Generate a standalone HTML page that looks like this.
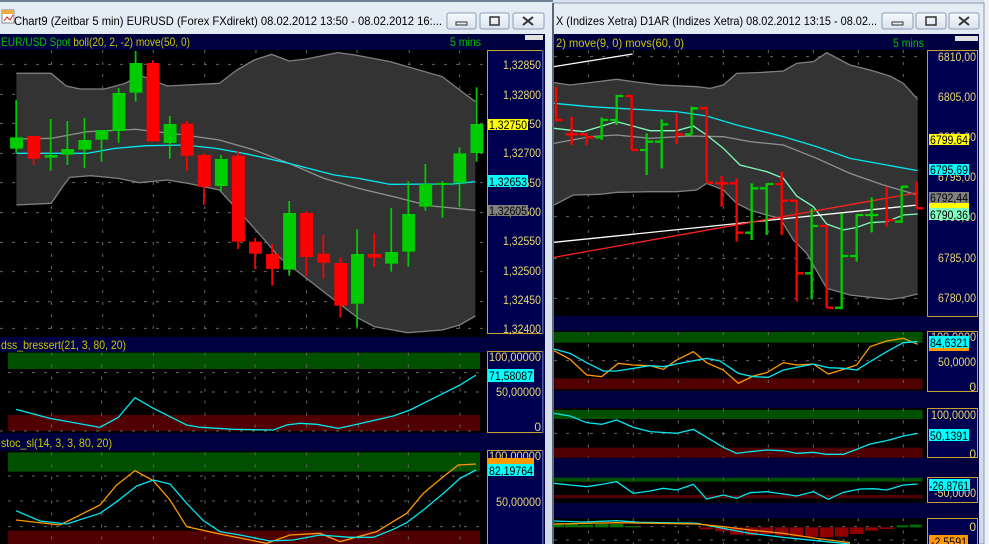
<!DOCTYPE html>
<html><head><meta charset="utf-8"><style>
html,body{margin:0;padding:0;background:#d6e0ec;width:989px;height:544px;overflow:hidden}
svg{display:block}
text{font-family:"Liberation Sans",sans-serif}
</style></head><body>
<svg width="989" height="544" viewBox="0 0 989 544" xmlns="http://www.w3.org/2000/svg">
<defs>
<linearGradient id="tb" x1="0" y1="0" x2="0" y2="1"><stop offset="0" stop-color="#e4ecf5"/><stop offset="1" stop-color="#cfdbe8"/></linearGradient>
<linearGradient id="bt" x1="0" y1="0" x2="0" y2="1"><stop offset="0" stop-color="#f6f9fc"/><stop offset="1" stop-color="#d9e3ee"/></linearGradient>
</defs>
<rect width="989" height="544" fill="#d6e0ec"/>
<rect x="984" y="0" width="5" height="544" fill="#eef1f5"/>
<!-- RIGHT WINDOW -->
<rect x="551" y="3" width="433" height="541" fill="url(#tb)" stroke="#8a9bb0"/>
<text x="556" y="25" font-size="12" fill="#000" textLength="321" lengthAdjust="spacingAndGlyphs">X (Indizes Xetra) D1AR (Indizes Xetra) 08.02.2012 13:15 - 08.02...</text>
<rect x="882" y="13" width="31" height="16" rx="2" fill="url(#bt)" stroke="#8d9db2"/><rect x="892" y="22" width="11" height="3" fill="none" stroke="#333"/>
<rect x="916" y="13" width="30" height="16" rx="2" fill="url(#bt)" stroke="#8d9db2"/><rect x="926" y="17" width="10" height="8" fill="none" stroke="#333" stroke-width="1.5"/>
<rect x="949" y="13" width="30" height="16" rx="2" fill="url(#bt)" stroke="#8d9db2"/><path d="M959 17l10 8M969 17l-10 8" stroke="#333" stroke-width="2"/>
<rect x="554" y="34" width="425" height="510" fill="#000040"/>
<text x="556" y="47" font-size="12" fill="#c8c800" textLength="128" lengthAdjust="spacingAndGlyphs">2) move(9, 0) movs(60, 0)</text>
<text x="893" y="47" font-size="12" fill="#00c000" textLength="31" lengthAdjust="spacingAndGlyphs">5 mins</text>
<rect x="955" y="36" width="23" height="5" fill="#e0e0e0"/>
<rect x="554" y="50" width="373" height="266" fill="#000"/>
<rect x="554" y="331" width="373" height="60" fill="#000"/>
<rect x="554" y="408" width="373" height="50" fill="#000"/>
<rect x="554" y="478" width="373" height="25" fill="#000"/>
<rect x="554" y="518" width="373" height="26" fill="#000"/>
<!-- right main -->
<svg x="550" y="40" width="439" height="290" viewBox="0 0 1317 870" preserveAspectRatio="none">
<g stroke="#666" stroke-dasharray="3 9" stroke-width="1" fill="none">
<path vector-effect="non-scaling-stroke" d="M115 30V820M250 30V820M385 30V820M520 30V820M655 30V820M790 30V820M925 30V820M1060 30V820"/>
<path vector-effect="non-scaling-stroke" d="M12 50H1120M12 170H1120M12 290H1120M12 410H1120M12 530H1120M12 655H1120M12 775H1120"/>
</g>
<polygon fill="#333" points="12,128 60,135 120,128 200,118 250,125 330,135 440,140 480,145 520,135 560,100 640,97 700,93 740,70 790,65 830,38 900,75 960,90 1020,108 1060,130 1103,178 1103,762 1060,772 1020,778 960,772 900,765 830,745 770,640 730,600 690,535 650,525 600,510 560,490 520,450 470,430 440,450 380,455 300,455 200,457 150,463 70,465 12,495"/>
<g fill="none" stroke-width="1.3">
<polyline stroke="#808080" vector-effect="non-scaling-stroke" points="12,128 60,135 120,128 200,118 250,125 330,135 440,140 480,145 520,135 560,100 640,97 700,93 740,70 790,65 830,38 900,75 960,90 1020,108 1060,130 1103,178"/>
<polyline stroke="#808080" vector-effect="non-scaling-stroke" points="1103,762 1060,772 1020,778 960,772 900,765 830,745 770,640 730,600 690,535 650,525 600,510 560,490 520,450 470,430 440,450 380,455 300,455 200,457 150,463 70,465 12,495"/>
<polyline stroke="#fff" vector-effect="non-scaling-stroke" points="12,80 248,42"/>
<polyline stroke="#00e8f0" vector-effect="non-scaling-stroke" points="12,190 120,200 380,215 470,228 560,255 700,290 800,320 900,355 1103,392"/>
<polyline stroke="#909090" vector-effect="non-scaling-stroke" points="12,310 120,290 200,285 300,295 420,288 520,290 600,305 700,315 800,355 900,400 1000,435 1103,465"/>
<polyline stroke="#80ffc0" vector-effect="non-scaling-stroke" points="12,265 100,275 200,245 300,272 380,272 430,258 470,285 520,325 570,375 650,395 700,415 740,468 790,500 830,552 880,570 920,562 960,548 1010,545 1060,525 1103,522"/>
<polyline stroke="#fff" vector-effect="non-scaling-stroke" points="12,607 1103,495"/>
<polyline stroke="#ff2020" vector-effect="non-scaling-stroke" points="12,652 1103,458"/>
</g>
<g stroke-width="7" fill="none">
<path stroke="#ff0000" d="M18 140V245M18 240H38M65 230V315M65 283H85M45 283H65M110 280V315M110 292H130M90 283H110M245 165V330M225 168H245M245 330H265M380 220V312M380 283H400M470 200V425M450 205H470M470 428H490M515 408V500M495 430H515M515 430H535M560 415V605M540 430H560M560 578H580M695 395V585M675 432H695M695 482H715M740 480V785M720 482H740M740 700H760M830 555V803M810 558H830M830 803H850M1010 440V560M1010 540H1030M1100 425V505M1100 505H1120"/>
<path stroke="#00cc00" d="M155 232V300M135 292H155M155 240H175M200 165V255M180 240H200M200 168H220M290 280V405M270 330H290M290 305H310M335 238V385M315 305H335M335 253H355M425 200V283M405 283H425M425 205H445M605 430V600M585 578H605M605 445H625M650 430V585M630 445H650M650 432H670M785 505V778M765 700H785M785 558H805M875 520V808M855 803H875M875 648H895M920 522V665M900 648H920M920 525H940M965 472V577M945 525H965M965 525H985M1055 438V548M1035 545H1055M1055 440H1075"/>
</g>
</svg>
<!-- right sub -->
<svg x="550" y="320" width="439" height="224" viewBox="0 0 1317 672" preserveAspectRatio="none">
<rect x="12" y="36" width="1106" height="32" fill="#005000"/><rect x="12" y="175" width="1106" height="33" fill="#500000"/>
<rect x="12" y="270" width="1106" height="27" fill="#005000"/><rect x="12" y="383" width="1106" height="30" fill="#500000"/>
<rect x="12" y="473" width="1106" height="12" fill="#005000"/><rect x="12" y="525" width="1106" height="10" fill="#500000"/>
<g stroke="#666" stroke-dasharray="3 9" fill="none">
<path vector-effect="non-scaling-stroke" d="M115 36V208M250 36V208M385 36V208M520 36V208M655 36V208M790 36V208M925 36V208M1060 36V208M115 265V413M250 265V413M385 265V413M520 265V413M655 265V413M790 265V413M925 265V413M1060 265V413M115 473V535M250 473V535M385 473V535M520 473V535M655 473V535M790 473V535M925 473V535M1060 473V535M115 595V672M250 595V672M385 595V672M520 595V672M655 595V672M790 595V672M925 595V672M1060 595V672"/>
<path vector-effect="non-scaling-stroke" d="M12 122H1120M12 340H1120M12 620H1120M12 660H1120"/>
</g>
<g fill="#007000"><rect x="12" y="610" width="30" height="12"/><rect x="45" y="612" width="40" height="10"/><rect x="90" y="614" width="40" height="8"/><rect x="135" y="612" width="40" height="10"/><rect x="180" y="612" width="40" height="10"/><rect x="225" y="618" width="40" height="4"/><rect x="1040" y="616" width="35" height="6"/><rect x="1080" y="614" width="35" height="8"/></g>
<g fill="#900000"><rect x="450" y="622" width="40" height="6"/><rect x="495" y="622" width="40" height="12"/><rect x="540" y="622" width="40" height="22"/><rect x="585" y="622" width="40" height="24"/><rect x="630" y="622" width="40" height="20"/><rect x="675" y="622" width="40" height="25"/><rect x="720" y="622" width="40" height="28"/><rect x="765" y="622" width="40" height="28"/><rect x="810" y="622" width="40" height="30"/><rect x="855" y="622" width="40" height="28"/><rect x="900" y="622" width="40" height="20"/><rect x="945" y="622" width="40" height="10"/><rect x="990" y="622" width="40" height="5"/></g>
<g fill="none" stroke-width="1.3">
<polyline stroke="#ff9900" vector-effect="non-scaling-stroke" points="12,92 60,118 110,165 155,170 205,130 250,135 300,137 340,148 380,120 430,95 470,128 520,150 565,190 610,168 650,158 700,128 740,135 790,132 835,162 880,148 920,135 960,80 1010,63 1060,55 1103,73"/>
<polyline stroke="#00e8f0" vector-effect="non-scaling-stroke" points="12,87 60,100 110,128 160,153 200,153 250,145 300,137 340,140 400,128 470,115 510,123 565,160 610,170 655,172 700,150 790,132 835,143 880,145 920,150 960,125 1010,95 1060,68 1103,65"/>
<polyline stroke="#00e8f0" vector-effect="non-scaling-stroke" points="12,280 60,288 110,308 155,313 200,300 250,322 300,335 380,340 430,328 480,358 520,382 560,400 600,395 650,390 700,392 740,400 790,397 830,403 880,403 920,388 960,372 1010,362 1060,348 1103,340"/>
<polyline stroke="#00e8f0" vector-effect="non-scaling-stroke" points="12,490 60,495 110,500 155,493 200,485 250,520 300,513 340,505 380,510 430,493 470,537 520,525 560,535 600,518 650,515 700,522 740,528 790,515 835,538 880,517 930,507 970,506 1010,510 1060,495 1103,492"/>
<polyline stroke="#00e8f0" vector-effect="non-scaling-stroke" points="12,603 100,606 200,602 270,607 440,610 520,625 600,640 700,652 800,662 900,672"/>
<polyline stroke="#ff9900" vector-effect="non-scaling-stroke" points="12,612 200,608 440,612 520,620 600,630 700,640 800,655 900,668"/>
</g>
</svg>
<!-- right axes -->
<g fill="#000050" stroke="#c8a030">
<rect x="927.5" y="50.5" width="50" height="266"/><rect x="927.5" y="331.5" width="50" height="60"/><rect x="927.5" y="408.5" width="50" height="49"/><rect x="927.5" y="477.5" width="50" height="25"/><rect x="927.5" y="518.5" width="50" height="26"/>
</g>
<g font-size="12" fill="#e8d870" text-anchor="end" lengthAdjust="spacingAndGlyphs">
<text x="976" y="61" textLength="38" lengthAdjust="spacingAndGlyphs">6810,00</text><text x="976" y="101" textLength="38" lengthAdjust="spacingAndGlyphs">6805,00</text><text x="976" y="141" textLength="38" lengthAdjust="spacingAndGlyphs">6800,00</text><text x="976" y="181" textLength="38" lengthAdjust="spacingAndGlyphs">6795,00</text><text x="976" y="221" textLength="38" lengthAdjust="spacingAndGlyphs">6790,00</text><text x="976" y="262" textLength="38" lengthAdjust="spacingAndGlyphs">6785,00</text><text x="976" y="302" textLength="38" lengthAdjust="spacingAndGlyphs">6780,00</text>
<text x="976" y="341" textLength="45" lengthAdjust="spacingAndGlyphs">100,0000</text><text x="976" y="366" textLength="38" lengthAdjust="spacingAndGlyphs">50,0000</text><text x="976" y="391">0</text>
<text x="976" y="419" textLength="45" lengthAdjust="spacingAndGlyphs">100,0000</text><text x="976" y="458">0</text><text x="976" y="497" textLength="42" lengthAdjust="spacingAndGlyphs">-50,0000</text><text x="976" y="531">0</text>
</g>
<rect x="929" y="134" width="40" height="11" fill="#ffff00"/><rect x="929" y="164" width="40" height="11" fill="#00ffff"/><rect x="929" y="192" width="40" height="11" fill="#808080"/><rect x="929" y="203" width="40" height="5" fill="#ffff00"/><rect x="929" y="208" width="40" height="12" fill="#80ffc0"/>
<rect x="929" y="336" width="40" height="12" fill="#00ffff"/><rect x="929" y="348" width="40" height="3" fill="#ff9900"/><rect x="929" y="429" width="40" height="12" fill="#00ffff"/><rect x="929" y="479" width="41" height="12" fill="#00ffff"/><rect x="929" y="535" width="39" height="9" fill="#ff9900"/>
<g font-size="12" fill="#000">
<text x="930" y="144" textLength="38" lengthAdjust="spacingAndGlyphs">6799,64</text><text x="930" y="174" textLength="38" lengthAdjust="spacingAndGlyphs">6795,69</text><text x="930" y="202" textLength="38" lengthAdjust="spacingAndGlyphs">6792,44</text><text x="930" y="219" textLength="38" lengthAdjust="spacingAndGlyphs">6790,36</text><text x="930" y="347" textLength="38" lengthAdjust="spacingAndGlyphs">84,6321</text><text x="930" y="440" textLength="38" lengthAdjust="spacingAndGlyphs">50,1391</text><text x="929" y="490" textLength="40" lengthAdjust="spacingAndGlyphs">-26,8761</text><text x="931" y="546" textLength="36" lengthAdjust="spacingAndGlyphs">-2,5591</text>
</g>
<!-- LEFT WINDOW -->
<rect x="0" y="0" width="553" height="544" fill="url(#tb)"/>
<rect x="0" y="0" width="553" height="2" fill="#6f8095"/>
<rect x="552" y="3" width="2" height="541" fill="#59687a"/>
<rect x="2" y="10" width="12" height="13" fill="#fff" stroke="#888"/><rect x="2" y="10" width="12" height="4" fill="#e8b040"/><path d="M4 21l3-4 3 3 3-5" stroke="#d02020" fill="none"/>
<text x="14" y="25" font-size="12" fill="#000" textLength="428" lengthAdjust="spacingAndGlyphs">Chart9 (Zeitbar 5 min)  EURUSD (Forex FXdirekt) 08.02.2012 13:50 - 08.02.2012 16:...</text>
<rect x="447" y="13" width="29" height="16" rx="2" fill="url(#bt)" stroke="#8d9db2"/><rect x="456" y="22" width="11" height="3" fill="none" stroke="#333"/>
<rect x="480" y="13" width="29" height="16" rx="2" fill="url(#bt)" stroke="#8d9db2"/><rect x="490" y="17" width="9" height="8" fill="none" stroke="#333" stroke-width="1.5"/>
<rect x="513" y="13" width="31" height="16" rx="2" fill="url(#bt)" stroke="#8d9db2"/><path d="M523 17l10 8M533 17l-10 8" stroke="#333" stroke-width="2"/>
<rect x="0" y="34" width="545" height="510" fill="#000040"/>
<text x="1" y="46" font-size="12" fill="#00c000" textLength="189" lengthAdjust="spacingAndGlyphs">EUR/USD Spot <tspan fill="#c8c800">boll(20, 2, -2) move(50, 0)</tspan></text>
<text x="450" y="46" font-size="12" fill="#00c000" textLength="31" lengthAdjust="spacingAndGlyphs">5 mins</text>
<rect x="525" y="35" width="18" height="5" fill="#e0e0e0"/>
<rect x="0" y="50" width="487" height="287" fill="#000"/>
<rect x="0" y="352" width="487" height="81" fill="#000"/>
<rect x="0" y="451" width="487" height="93" fill="#000"/>
<svg x="0" y="40" width="545" height="300" viewBox="0 0 1565 900" preserveAspectRatio="none">
<g stroke="#666" stroke-dasharray="3 9" fill="none">
<path vector-effect="non-scaling-stroke" d="M148 30V880M295 30V880M440 30V880M588 30V880M735 30V880M880 30V880M1025 30V880M1175 30V880M1320 30V880"/>
<path vector-effect="non-scaling-stroke" d="M0 73H1395M0 163H1395M0 250H1395M0 340H1395M0 428H1395M0 518H1395M0 607H1395M0 695H1395M0 785H1395M0 865H1395"/>
</g>
<polygon fill="#333" points="47,100 147,100 190,138 230,147 300,147 360,130 400,105 480,138 630,130 680,90 730,60 780,43 830,63 880,57 970,38 1020,45 1120,65 1270,110 1320,150 1365,185 1365,828 1320,855 1270,870 1170,878 1075,860 1030,835 960,780 880,715 800,650 760,600 700,530 630,450 540,430 480,420 400,428 340,415 260,407 200,412 180,440 147,490 47,495"/>
<g fill="none" stroke-width="1.3">
<polyline stroke="#808080" vector-effect="non-scaling-stroke" points="47,100 147,100 190,138 230,147 300,147 360,130 400,105 480,138 630,130 680,90 730,60 780,43 830,63 880,57 970,38 1020,45 1120,65 1270,110 1320,150 1365,185"/>
<polyline stroke="#808080" vector-effect="non-scaling-stroke" points="1365,828 1320,855 1270,870 1170,878 1075,860 1030,835 960,780 880,715 800,650 760,600 700,530 630,450 540,430 480,420 400,428 340,415 260,407 200,412 180,440 147,490 47,495"/>
<polyline stroke="#909090" vector-effect="non-scaling-stroke" points="47,297 147,295 250,275 390,268 530,285 630,300 730,330 830,370 930,415 1030,445 1130,470 1230,497 1365,511"/>
<polyline stroke="#00e8f0" vector-effect="non-scaling-stroke" points="47,340 250,340 330,325 420,317 530,315 620,325 700,340 830,370 960,405 1030,415 1120,433 1300,432 1365,425"/>
</g>
<g fill="#00cc00">
<rect x="44" y="180" width="5" height="160"/><rect x="29" y="292" width="37" height="34"/>
<rect x="143" y="237" width="5" height="155"/><rect x="128" y="345" width="37" height="8"/>
<rect x="191" y="243" width="5" height="132"/><rect x="176" y="327" width="37" height="17"/>
<rect x="240" y="234" width="5" height="150"/><rect x="225" y="300" width="37" height="29"/>
<rect x="289" y="270" width="5" height="95"/><rect x="274" y="270" width="37" height="29"/>
<rect x="338" y="145" width="5" height="163"/><rect x="323" y="159" width="37" height="114"/>
<rect x="387" y="33" width="5" height="152"/><rect x="372" y="69" width="37" height="89"/>
<rect x="485" y="228" width="5" height="128"/><rect x="470" y="252" width="37" height="57"/>
<rect x="632" y="345" width="5" height="108"/><rect x="617" y="357" width="37" height="81"/>
<rect x="828" y="483" width="5" height="224"/><rect x="813" y="519" width="37" height="170"/>
<rect x="1023" y="568" width="5" height="294"/><rect x="1008" y="642" width="37" height="149"/>
<rect x="1121" y="504" width="5" height="191"/><rect x="1106" y="636" width="37" height="35"/>
<rect x="1170" y="424" width="5" height="256"/><rect x="1155" y="522" width="37" height="113"/>
<rect x="1219" y="372" width="5" height="140"/><rect x="1204" y="432" width="37" height="68"/>
<rect x="1268" y="424" width="5" height="109"/><rect x="1253" y="429" width="37" height="6"/>
<rect x="1317" y="322" width="5" height="180"/><rect x="1302" y="340" width="37" height="88"/>
<rect x="1366" y="142" width="5" height="223"/><rect x="1351" y="252" width="37" height="87"/>
</g>
<g fill="#ff0000">
<rect x="94" y="288" width="5" height="87"/><rect x="79" y="288" width="37" height="68"/>
<rect x="436" y="60" width="5" height="244"/><rect x="421" y="69" width="37" height="235"/>
<rect x="534" y="243" width="5" height="149"/><rect x="519" y="251" width="37" height="96"/>
<rect x="583" y="340" width="5" height="155"/><rect x="568" y="345" width="37" height="95"/>
<rect x="681" y="333" width="5" height="294"/><rect x="666" y="347" width="37" height="258"/>
<rect x="730" y="594" width="5" height="93"/><rect x="715" y="605" width="37" height="36"/>
<rect x="779" y="612" width="5" height="125"/><rect x="764" y="642" width="37" height="45"/>
<rect x="877" y="514" width="5" height="193"/><rect x="862" y="519" width="37" height="132"/>
<rect x="926" y="585" width="5" height="131"/><rect x="911" y="641" width="37" height="27"/>
<rect x="975" y="653" width="5" height="180"/><rect x="960" y="669" width="37" height="128"/>
<rect x="1072" y="580" width="5" height="100"/><rect x="1057" y="642" width="37" height="11"/>
</g>
</svg>
<svg x="0" y="330" width="480" height="214" viewBox="0 0 1440 642" preserveAspectRatio="none">
<rect x="24" y="68" width="1416" height="49" fill="#005000"/><rect x="24" y="255" width="1416" height="48" fill="#500000"/>
<rect x="24" y="367" width="1416" height="58" fill="#005000"/><rect x="24" y="602" width="1416" height="40" fill="#500000"/>
<g stroke="#666" stroke-dasharray="3 9" fill="none">
<path vector-effect="non-scaling-stroke" d="M155 68V303M305 68V303M460 68V303M615 68V303M765 68V303M920 68V303M1075 68V303M1225 68V303M1380 68V303M155 367V642M305 367V642M460 367V642M615 367V642M765 367V642M920 367V642M1075 367V642M1225 367V642M1380 367V642"/>
<path vector-effect="non-scaling-stroke" d="M24 128H1440M24 186H1440M0 303H1440M24 438H1440M24 513H1440M24 590H1440"/>
</g>
<g fill="none" stroke-width="1.3">
<polyline stroke="#00e8f0" vector-effect="non-scaling-stroke" points="48,238 150,265 300,292 355,262 405,203 460,235 560,285 600,292 700,298 820,300 860,285 900,280 950,283 1015,295 1070,283 1180,258 1230,240 1300,205 1380,165 1428,135"/>
<polyline stroke="#ff9900" vector-effect="non-scaling-stroke" points="48,570 180,585 300,525 350,465 405,422 460,452 510,510 560,590 650,610 800,640 870,615 960,610 1020,635 1130,605 1220,550 1270,490 1330,440 1375,405 1428,402"/>
<polyline stroke="#00e8f0" vector-effect="non-scaling-stroke" points="48,542 120,573 200,582 300,550 350,515 410,468 460,450 510,462 560,520 610,572 660,605 720,615 810,633 880,630 960,615 1050,622 1120,622 1180,598 1220,578 1270,540 1330,490 1380,445 1428,420"/>
</g>
</svg>
<text x="1" y="349" font-size="12" fill="#c8c800" textLength="125" lengthAdjust="spacingAndGlyphs">dss_bressert(21, 3, 80, 20)</text>
<text x="1" y="447" font-size="12" fill="#c8c800" textLength="111" lengthAdjust="spacingAndGlyphs">stoc_sl(14, 3, 3, 80, 20)</text>
<!-- left axes -->
<g fill="#000050" stroke="#c8a030">
<rect x="487.5" y="50.5" width="55" height="283"/><rect x="487.5" y="351.5" width="55" height="81"/><rect x="487.5" y="450.5" width="55" height="94"/>
</g>
<path d="M543 50V334M543 351V433M543 450V544" stroke="#2040d0" stroke-width="1.5"/>
<g font-size="12" fill="#e8d870" text-anchor="end">
<text x="541" y="69" textLength="38" lengthAdjust="spacingAndGlyphs">1,32850</text><text x="541" y="99" textLength="38" lengthAdjust="spacingAndGlyphs">1,32800</text><text x="541" y="128" textLength="38" lengthAdjust="spacingAndGlyphs">1,32750</text><text x="541" y="157" textLength="38" lengthAdjust="spacingAndGlyphs">1,32700</text><text x="541" y="187" textLength="38" lengthAdjust="spacingAndGlyphs">1,32650</text><text x="541" y="216" textLength="38" lengthAdjust="spacingAndGlyphs">1,32600</text><text x="541" y="245" textLength="38" lengthAdjust="spacingAndGlyphs">1,32550</text><text x="541" y="275" textLength="38" lengthAdjust="spacingAndGlyphs">1,32500</text><text x="541" y="304" textLength="38" lengthAdjust="spacingAndGlyphs">1,32450</text><text x="541" y="333" textLength="38" lengthAdjust="spacingAndGlyphs">1,32400</text>
<text x="541" y="361" textLength="52" lengthAdjust="spacingAndGlyphs">100,00000</text><text x="541" y="396" textLength="45" lengthAdjust="spacingAndGlyphs">50,00000</text><text x="541" y="431">0</text>
<text x="541" y="460" textLength="52" lengthAdjust="spacingAndGlyphs">100,00000</text><text x="541" y="506" textLength="45" lengthAdjust="spacingAndGlyphs">50,00000</text>
</g>
<rect x="488" y="119" width="40" height="11" fill="#ffff00"/><rect x="488" y="175" width="40" height="12" fill="#00ffff"/><rect x="488" y="205" width="40" height="11" fill="#808080"/>
<rect x="488" y="369" width="46" height="13" fill="#00ffff"/><rect x="488" y="458" width="46" height="6" fill="#ff9900"/><rect x="488" y="464" width="46" height="12" fill="#00ffff"/>
<g font-size="12" fill="#000">
<text x="489" y="129" textLength="38" lengthAdjust="spacingAndGlyphs">1,32750</text><text x="489" y="186" textLength="38" lengthAdjust="spacingAndGlyphs">1,32653</text><text x="489" y="215" textLength="38" lengthAdjust="spacingAndGlyphs">1,32605</text><text x="489" y="380" textLength="44" lengthAdjust="spacingAndGlyphs">71,58087</text><text x="489" y="475" textLength="44" lengthAdjust="spacingAndGlyphs">82,19764</text>
</g>
</svg>
</body></html>
